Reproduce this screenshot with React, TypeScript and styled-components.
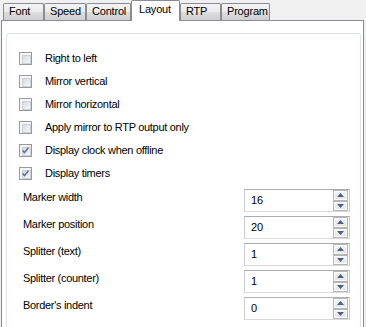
import React from 'react';
import styled, { createGlobalStyle } from "styled-components";

const GlobalStyle = createGlobalStyle`
  html, body {
    margin: 0;
    padding: 0;
    background: #f0f0f0;
  }
  body {
    font-family: "Liberation Sans", Arial, sans-serif;
    font-size: 11px;
    color: #000;
  }
`;

const tabs = [
    { label: 'Font', width: 41 },
    { label: 'Speed', width: 42 },
    { label: 'Control', width: 45 },
    { label: 'Layout', width: 49, active: true },
    { label: 'RTP', width: 41 },
    { label: 'Program', width: 49 },
];

const checks = [
    { label: 'Right to left', checked: false },
    { label: 'Mirror vertical', checked: false },
    { label: 'Mirror horizontal', checked: false },
    { label: 'Apply mirror to RTP output only', checked: false },
    { label: 'Display clock when offline', checked: true },
    { label: 'Display timers', checked: true },
];

const spins = [
    { label: 'Marker width', value: '16' },
    { label: 'Marker position', value: '20' },
    { label: 'Splitter (text)', value: '1' },
    { label: 'Splitter (counter)', value: '1' },
    { label: "Border's indent", value: '0' },
];

type TabProps = {
    $active?: boolean,
    $width: number,
}

type CheckProps = {
    $checked?: boolean,
}

const Arrow = ({ up }: { up?: boolean }) => (
    <svg width="7" height="4" viewBox="0 0 7 4">
        {up
            ? <path d="M0 4 L3.5 0 L7 4 Z" fill="#4c5f8f" />
            : <path d="M0 0 L3.5 4 L7 0 Z" fill="#4c5f8f" />}
    </svg>
);

const CheckMark = () => (
    <svg width="11" height="11" viewBox="0 0 11 11">
        <path d="M2.6 5.4 L4.5 7.6 L8.4 2.8" fill="none" stroke="#5a6c9a" strokeWidth="1.5" />
    </svg>
);

export default function App() {
    return (
        <Window>
            <GlobalStyle />
            <TabStrip>
                {tabs.map(t => (
                    <Tab key={t.label} $active={t.active} $width={t.width}>{t.label}</Tab>
                ))}
            </TabStrip>
            <Page>
                <GroupBox>
                    <CheckList>
                        {checks.map(c => (
                            <CheckRow key={c.label}>
                                <CheckBox $checked={c.checked}>
                                    {c.checked && <CheckMark />}
                                </CheckBox>
                                <CheckLabel>{c.label}</CheckLabel>
                            </CheckRow>
                        ))}
                    </CheckList>
                    <SpinList>
                        {spins.map(s => (
                            <SpinRow key={s.label}>
                                <SpinLabel>{s.label}</SpinLabel>
                                <SpinBox>
                                    <SpinValue>{s.value}</SpinValue>
                                    <SpinButtons>
                                        <SpinButton><Arrow up /></SpinButton>
                                        <SpinButton><Arrow /></SpinButton>
                                    </SpinButtons>
                                </SpinBox>
                            </SpinRow>
                        ))}
                    </SpinList>
                </GroupBox>
            </Page>
        </Window>
    );
}

const Window = styled.div`
  width: 366px;
  height: 327px;
  overflow: hidden;
  background: #f0f0f0;
  display: flex;
  flex-direction: column;
`;

const TabStrip = styled.div`
  display: flex;
  align-items: flex-end;
  height: 20px;
  padding-left: 3px;
  box-sizing: border-box;
`;

const Tab = styled.div<TabProps>`
  position: relative;
  z-index: ${p => p.$active ? 2 : 1};
  box-sizing: border-box;
  width: ${p => p.$width}px;
  height: ${p => p.$active ? '21px' : '17px'};
  margin-bottom: ${p => p.$active ? '-1px' : '0'};
  padding: ${p => p.$active ? '2px 0 0 7px' : '1px 0 0 5px'};
  line-height: 13px;
  letter-spacing: -0.2px;
  border: 1px solid #898c95;
  border-bottom: none;
  border-radius: 2px 2px 0 0;
  background: ${p => p.$active ? '#ffffff' : 'linear-gradient(#f3f3f3, #ebebeb 50%, #dddddd 51%, #cfcfcf)'};
  white-space: nowrap;
`;

const Page = styled.div`
  box-sizing: border-box;
  width: 363px;
  height: 320px;
  margin-left: 1px;
  padding: 12px 2px 0 4px;
  background: #ffffff;
  border: 1px solid #898c95;
`;

const GroupBox = styled.div`
  box-sizing: border-box;
  height: 310px;
  padding-top: 13px;
  border: 1px solid #dde3e8;
  border-radius: 3px;
`;

const CheckList = styled.div`
  display: flex;
  flex-direction: column;
  padding-left: 12px;
`;

const CheckRow = styled.div`
  display: flex;
  align-items: center;
  gap: 13px;
  height: 23px;
`;

const CheckBox = styled.span<CheckProps>`
  position: relative;
  box-sizing: border-box;
  width: 13px;
  height: 13px;
  border: 1px solid #999a9b;
  background: #f6f6f6;
  display: flex;
  align-items: center;
  justify-content: center;

  &::before {
    content: '';
    position: absolute;
    left: 2px;
    top: 2px;
    width: 7px;
    height: 7px;
    border: 1px solid #cdd0d5;
    background: linear-gradient(135deg, #d8dbe0, #f7f7f7);
  }

  svg {
    position: relative;
    z-index: 1;
  }
`;

const CheckLabel = styled.span`
  line-height: 13px;
  letter-spacing: -0.3px;
  white-space: nowrap;
`;

const SpinList = styled.div`
  display: flex;
  flex-direction: column;
  gap: 4px;
  margin-top: 4px;
`;

const SpinRow = styled.div`
  display: flex;
  justify-content: space-between;
  align-items: flex-start;
  height: 23px;
`;

const SpinLabel = styled.span`
  padding: 2px 0 0 16px;
  line-height: 13px;
  letter-spacing: -0.3px;
  white-space: nowrap;
`;

const SpinBox = styled.div`
  box-sizing: border-box;
  display: flex;
  width: 106px;
  height: 23px;
  margin-right: 10px;
  border: 1px solid;
  border-color: #abadb3 #c9ccd2 #d6d9de #c9ccd2;
  background: #ffffff;
`;

const SpinValue = styled.span`
  flex: 1;
  padding-left: 6px;
  line-height: 21px;
`;

const SpinButtons = styled.div`
  display: flex;
  flex-direction: column;
  width: 15px;
  margin-right: 1px;
`;

const SpinButton = styled.div`
  flex: 1;
  box-sizing: border-box;
  display: flex;
  align-items: center;
  justify-content: center;
  border: 1px solid #b5b5b5;
  box-shadow: inset 0 0 0 1px #fcfcfc;
  background: linear-gradient(#f4f4f4, #e4e4e4);
`;
